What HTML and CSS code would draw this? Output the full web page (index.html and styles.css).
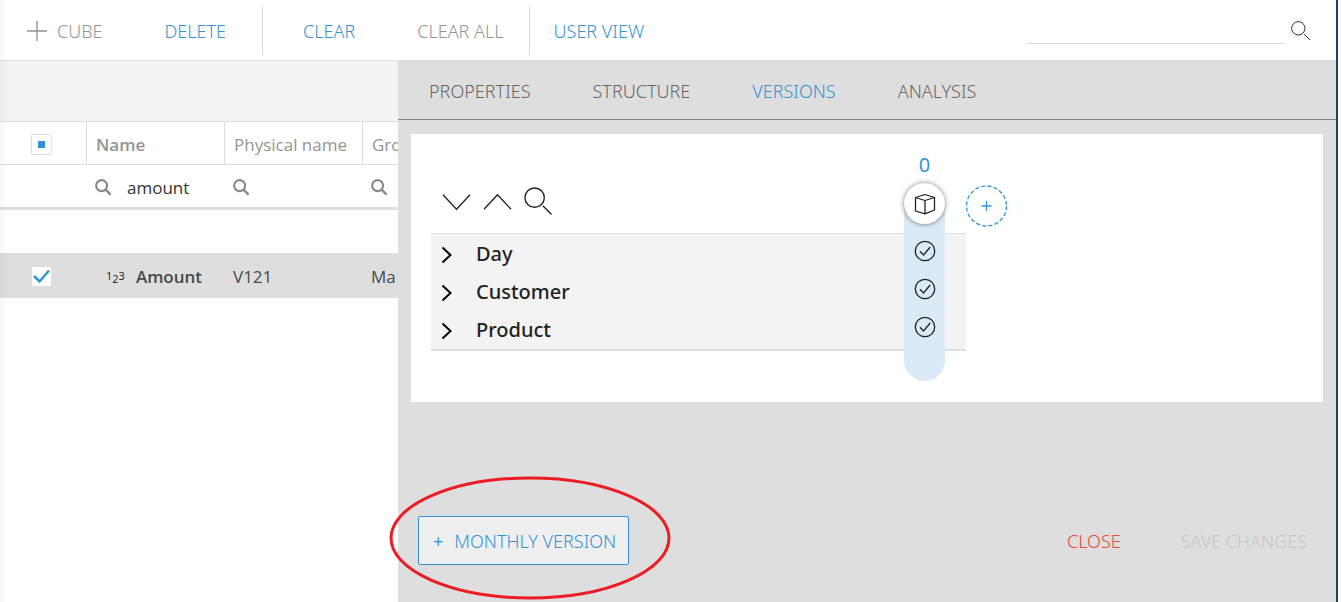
FILE: index.html
```
<!DOCTYPE html>
<html lang="en">
<head>
    <meta charset="UTF-8">
    <meta name="viewport" content="width=device-width, initial-scale=1.0">
    <title>Cubes</title>
    <link rel="stylesheet" href="styles.css">
</head>
<body>
    <svg class="defs" aria-hidden="true">
        <symbol id="filter-search" viewBox="0 0 18 18">
            <circle cx="7" cy="7" r="5.8" fill="none" stroke="currentColor" stroke-width="2.2"/>
            <path d="M11 11l5.5 5.5" fill="none" stroke="currentColor" stroke-width="2.6"/>
        </symbol>
        <symbol id="thin-search" viewBox="0 0 30 30">
            <circle cx="11" cy="11" r="10" fill="none" stroke="currentColor" stroke-width="1.4"/>
            <path d="M19.5 19.5l9 9" fill="none" stroke="currentColor" stroke-width="1.4"/>
        </symbol>
        <symbol id="check-circle" viewBox="0 0 22 22">
            <circle cx="11" cy="11" r="9.7" fill="none" stroke="currentColor" stroke-width="1.3"/>
            <path d="M6 11.2l3.6 3.8 6.6-8" fill="none" stroke="currentColor" stroke-width="1.3"/>
        </symbol>
        <symbol id="chevron-right" viewBox="0 0 12 18">
            <path d="M1.5 1.5L9.5 9l-8 7.5" fill="none" stroke="currentColor" stroke-width="2"/>
        </symbol>
    </svg>

    <div class="app">
        <header class="toolbar">
            <div class="toolbar-group group-edit">
                <button class="text-button" disabled>
                    <svg class="plus-icon" viewBox="0 0 20 20"><path d="M10 0v20M0 10h20" stroke="currentColor" stroke-width="1.4"/></svg>
                    CUBE
                </button>
                <button class="text-button">DELETE</button>
            </div>
            <div class="toolbar-group group-clear">
                <button class="text-button">CLEAR</button>
                <button class="text-button" disabled>CLEAR ALL</button>
            </div>
            <div class="toolbar-group group-view">
                <button class="text-button">USER VIEW</button>
            </div>
            <div class="search">
                <input type="text" class="search-input" aria-label="Search">
                <button class="icon-button" aria-label="Search"><svg class="search-icon"><use href="#thin-search"/></svg></button>
            </div>
        </header>

        <main class="main">
            <section class="list">
                <div class="list-band"></div>
                <table class="cube-table">
                    <colgroup>
                        <col class="col-check">
                        <col class="col-text">
                        <col class="col-text">
                        <col class="col-text">
                    </colgroup>
                    <thead>
                        <tr class="head-row">
                            <th class="check-cell"><input type="checkbox" class="box box-partial" aria-label="Select all"></th>
                            <th class="sorted">Name</th>
                            <th>Physical name</th>
                            <th>Gro</th>
                        </tr>
                        <tr class="filter-row">
                            <td></td>
                            <td>
                                <label class="filter">
                                    <svg class="filter-icon"><use href="#filter-search"/></svg>
                                    <input type="text" class="filter-input" value="amount" aria-label="Filter by name">
                                </label>
                            </td>
                            <td>
                                <label class="filter">
                                    <svg class="filter-icon"><use href="#filter-search"/></svg>
                                    <input type="text" class="filter-input" aria-label="Filter by physical name">
                                </label>
                            </td>
                            <td>
                                <label class="filter">
                                    <svg class="filter-icon"><use href="#filter-search"/></svg>
                                    <input type="text" class="filter-input" aria-label="Filter by group">
                                </label>
                            </td>
                        </tr>
                    </thead>
                    <tbody>
                        <tr class="empty-row"><td colspan="4"></td></tr>
                        <tr class="selected-row">
                            <td class="check-cell"><input type="checkbox" class="box box-checked" aria-label="Select Amount" checked></td>
                            <td class="name-cell"><span class="type-mark"><span class="one">1</span><span class="two">2</span><span class="three">3</span></span>Amount</td>
                            <td>V121</td>
                            <td>Ma</td>
                        </tr>
                    </tbody>
                </table>
            </section>

            <section class="panel">
                <nav class="tabs">
                    <a href="#" class="tab">PROPERTIES</a>
                    <a href="#" class="tab">STRUCTURE</a>
                    <a href="#" class="tab active">VERSIONS</a>
                    <a href="#" class="tab">ANALYSIS</a>
                </nav>

                <div class="card">
                    <div class="matrix">
                        <div class="version-band"></div>
                        <div class="matrix-head">
                            <div class="tools">
                                <button class="icon-button" aria-label="Expand all"><svg class="tool-icon" viewBox="0 0 30 30"><path d="M1 8l14 15L29 8" fill="none" stroke="currentColor" stroke-width="1.4"/></svg></button>
                                <button class="icon-button" aria-label="Collapse all"><svg class="tool-icon" viewBox="0 0 30 30"><path d="M1 23L15 8l14 15" fill="none" stroke="currentColor" stroke-width="1.4"/></svg></button>
                                <button class="icon-button" aria-label="Find"><svg class="tool-icon"><use href="#thin-search"/></svg></button>
                            </div>
                            <div class="version">
                                <span class="version-number">0</span>
                                <button class="version-button" aria-label="Version 0">
                                    <svg class="cube-icon" viewBox="0 0 22 22"><path d="M11 1.5l9.5 3v12.500L11 20.800 1.500 18V4.500zM1.500 4.500L11 7.500l9.500-3M11 7.500v13" fill="none" stroke="currentColor" stroke-width="1.3" stroke-linejoin="round"/></svg>
                                </button>
                            </div>
                        </div>
                        <ul class="tree">
                            <li class="tree-row">
                                <svg class="chevron"><use href="#chevron-right"/></svg>
                                <span class="entity">Day</span>
                                <svg class="check"><use href="#check-circle"/></svg>
                            </li>
                            <li class="tree-row">
                                <svg class="chevron"><use href="#chevron-right"/></svg>
                                <span class="entity">Customer</span>
                                <svg class="check"><use href="#check-circle"/></svg>
                            </li>
                            <li class="tree-row">
                                <svg class="chevron"><use href="#chevron-right"/></svg>
                                <span class="entity">Product</span>
                                <svg class="check"><use href="#check-circle"/></svg>
                            </li>
                        </ul>
                    </div>
                    <button class="add-version" aria-label="Add version">
                        <svg viewBox="0 0 42 42"><circle cx="20.5" cy="21" r="20" fill="none" stroke="currentColor" stroke-width="1.3" stroke-dasharray="4.2 2.1"/><path d="M20.5 16v10M15.5 21h10" stroke="currentColor" stroke-width="1.3"/></svg>
                    </button>
                </div>

                <footer class="actions">
                    <div class="monthly">
                        <button class="monthly-button"><span class="monthly-plus">+</span>MONTHLY VERSION</button>
                        <svg class="marker" viewBox="0 0 284 126"><ellipse cx="142" cy="63" rx="139" ry="60" fill="none" stroke="#ed1c24" stroke-width="3"/></svg>
                    </div>
                    <button class="text-button close">CLOSE</button>
                    <button class="text-button save" disabled>SAVE CHANGES</button>
                </footer>
            </section>
        </main>
    </div>
</body>
</html>
```
FILE: styles.css
```
* {
    box-sizing: border-box;
}

body {
    margin: 0;
    padding-right: 4px;
    background: #fff;
    font-family: "Noto Sans", sans-serif;
    font-size: 18px;
    color: #222;
}

.defs {
    display: none;
}

button, input {
    font: inherit;
    color: inherit;
}

button {
    padding: 0;
    border: none;
    background: none;
    cursor: pointer;
}

.app {
    position: relative;
    display: flex;
    flex-direction: column;
    min-height: 100vh;
    border-right: 2px solid #1f3d60;
}

.app::before {
    content: "";
    position: absolute;
    top: 0;
    bottom: 0;
    left: 0;
    width: 10px;
    background: linear-gradient(to right, rgba(0,0,0,0.03), rgba(0,0,0,0));
    pointer-events: none;
    z-index: 1;
}

/* Toolbar */
.toolbar {
    display: flex;
    align-items: center;
    height: 60px;
    padding-right: 25px;
}

.toolbar-group {
    display: flex;
    align-items: center;
    gap: 62px;
    height: 49px;
    padding: 0 25px 0 40px;
    border-right: 1px solid #dedede;
}

.toolbar-group.group-edit {
    padding: 0 36px 0 27px;
}

.toolbar-group.group-view {
    padding-left: 24px;
    border-right: none;
}

.text-button {
    display: flex;
    align-items: center;
    gap: 10px;
    color: #3492d6;
    font-weight: 300;
    white-space: nowrap;
}

.toolbar .text-button {
    padding-top: 2px;
}

.text-button:disabled {
    color: #949494;
    cursor: default;
}

.plus-icon {
    width: 20px;
    height: 20px;
}

.icon-button {
    display: flex;
}

.search {
    display: flex;
    align-items: center;
    gap: 6px;
    margin-left: auto;
    padding-top: 2px;
}

.search-input {
    width: 259px;
    height: 26px;
    border: none;
    border-bottom: 1px solid #dedede;
    background: none;
    outline: none;
}

.search-icon {
    width: 20px;
    height: 20px;
}

/* Cube list */
.main {
    display: flex;
    flex: 1;
}

.list {
    width: 398px;
    overflow: hidden;
    font-family: "Open Sans", sans-serif;
    font-size: 17px;
}

.list-band {
    height: 62px;
    border-top: 1px solid #dedede;
    border-bottom: 1px solid #dedede;
    background: #f3f3f3;
}

.cube-table {
    width: 500px;
    table-layout: fixed;
    border-collapse: separate;
    border-spacing: 0;
}

.col-check {
    width: 86px;
}

.col-text {
    width: 138px;
}

.cube-table th,
.cube-table td {
    padding: 2px 9px 0;
    text-align: left;
    font-weight: 400;
    white-space: nowrap;
}

.head-row th {
    height: 43px;
    border-bottom: 1px solid #dedede;
    color: #949494;
}

.head-row th + th {
    border-left: 1px solid #dedede;
}

.head-row .sorted {
    font-weight: 600;
}

.filter-row td {
    height: 45px;
    border-bottom: 3px solid #dedede;
}

.empty-row td {
    height: 43px;
}

.selected-row td {
    height: 45px;
    background: #dedede;
    color: #484848;
}

.cube-table .check-cell {
    padding-left: 31px;
}

.box {
    display: block;
    width: 21px;
    height: 21px;
    margin: 0;
    appearance: none;
    border: 1px solid #dedede;
    border-radius: 2px;
    background: #fff center no-repeat;
}

.box-partial {
    background-image: linear-gradient(#3492d6, #3492d6);
    background-size: 7px 7px;
}

.box-checked {
    background-image: url("data:image/svg+xml,%3Csvg xmlns='http://www.w3.org/2000/svg' viewBox='0 0 19 19'%3E%3Cpath d='M2 9l5.500 5.500L17 3.500' fill='none' stroke='%233492d6' stroke-width='2.500'/%3E%3C/svg%3E");
}

.filter {
    display: flex;
    align-items: center;
    gap: 15px;
}

.filter-icon {
    flex: none;
    width: 17px;
    height: 17px;
    color: #888;
}

.filter-input {
    width: 80px;
    padding: 0;
    border: none;
    background: none;
    outline: none;
    color: #333;
}

.selected-row .name-cell {
    padding-left: 20px;
    font-weight: 600;
}

.type-mark {
    display: inline-flex;
    align-items: center;
    margin-right: 11px;
    color: #222;
    font-size: 11px;
    font-weight: 400;
    line-height: 12px;
    vertical-align: middle;
}

.type-mark .one,
.type-mark .three {
    padding-bottom: 4px;
}

.type-mark .two {
    padding-top: 2px;
}

/* Detail panel */
.panel {
    display: flex;
    flex: 1;
    flex-direction: column;
    background: #dedede;
}

.tabs {
    display: flex;
    align-items: center;
    gap: 62px;
    height: 60px;
    padding: 2px 31px 0;
    border-bottom: 1px solid #7f7f7f;
}

.tab {
    color: #666;
    font-weight: 300;
    text-decoration: none;
}

.tab.active {
    color: #3492d6;
}

.card {
    display: flex;
    align-items: flex-start;
    margin: 14px 13px 0;
    padding: 20px 20px 51px;
    background: #fff;
}

.matrix {
    position: relative;
    width: 535px;
}

/* blue strip behind the check marks of one version */
.version-band {
    position: absolute;
    top: 50px;
    right: 21px;
    bottom: -30px;
    width: 41px;
    border-radius: 0 0 21px 21px;
    background: #daeaf6;
    z-index: 1;
}

.matrix-head {
    display: flex;
    align-items: flex-start;
    justify-content: space-between;
    height: 79px;
    padding: 0 21px 0 11px;
}

.tools {
    display: flex;
    gap: 12px;
    padding-top: 33px;
}

.tool-icon {
    width: 29px;
    height: 29px;
}

.version {
    position: relative;
    display: flex;
    flex-direction: column;
    align-items: center;
    gap: 7px;
    z-index: 2;
}

.version-number {
    color: #3492d6;
    font-size: 20px;
    line-height: 22px;
}

.version-button {
    display: flex;
    align-items: center;
    justify-content: center;
    width: 41px;
    height: 41px;
    border-radius: 50%;
    background: #fff;
    box-shadow: 0 0 5px rgba(0,0,0,0.5);
}

.cube-icon {
    width: 22px;
    height: 22px;
}

.tree {
    margin: 0;
    padding: 0 0 1px;
    border-top: 1px solid #dedede;
    border-bottom: 2px solid #dedede;
    background: #f3f3f3;
    list-style: none;
}

.tree-row {
    display: flex;
    align-items: center;
    height: 38px;
    padding: 0 30px 0 10px;
}

.chevron {
    width: 12px;
    height: 18px;
    margin: 4px 23px 0 0;
    color: #000;
}

.entity {
    flex: 1;
    font-size: 20px;
    font-weight: 500;
}

.check {
    position: relative;
    width: 22px;
    height: 22px;
    margin-bottom: 4px;
    z-index: 2;
}

.add-version {
    width: 42px;
    height: 42px;
    margin-top: 31px;
    color: #3492d6;
}

.actions {
    display: flex;
    align-items: center;
    margin-top: auto;
    padding: 40px 29px 37px 20px;
}

.monthly {
    position: relative;
    margin-right: auto;
}

.monthly-button {
    display: flex;
    align-items: center;
    height: 49px;
    padding: 0 12px 0 14px;
    border: 1px solid #3492d6;
    border-radius: 2px;
    background: #efefef;
    color: #3492d6;
    font-weight: 300;
}

.monthly-plus {
    margin-right: 11px;
    font-weight: 400;
}

/* hand-drawn ring round the new button */
.marker {
    position: absolute;
    top: -41px;
    left: -30px;
    width: 284px;
    height: 126px;
    pointer-events: none;
}

.close {
    margin-right: 60px;
    color: #e9483f;
}

.text-button.close {
    color: #e9483f;
}

.text-button.save {
    color: #c6c6c6;
}
```
